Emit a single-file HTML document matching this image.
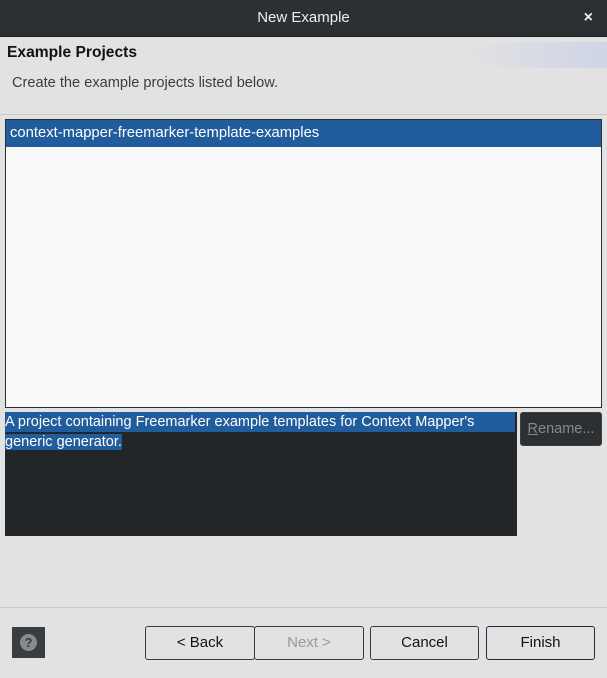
<!DOCTYPE html>
<html><head><style>
body{margin:0;width:607px;height:678px;background:#e2e2e2;font-family:"Liberation Sans",sans-serif;position:relative;overflow:hidden;font-size:14px}
.a{position:absolute;box-sizing:border-box;white-space:nowrap}
.btn{position:absolute;box-sizing:border-box;top:626px;height:34px;border:1px solid #3a3d40;border-radius:3px;background:#e2e2e2;text-align:center;line-height:32px;font-size:15px;color:#111}
</style></head><body>
<div class="a" style="left:0;top:0;width:607px;height:37px;background:#2d3033;border-bottom:1px solid #1a1c1e;color:#eee;text-align:center;line-height:36px;font-size:15px">New Example</div>
<div class="a" style="right:14px;top:9px;color:#eee;font-size:16px;font-weight:bold">×</div>
<div class="a" style="left:460px;top:42px;width:160px;height:26px;border-radius:50% 0 0 50%;background:linear-gradient(to right,rgba(226,226,226,1),rgba(205,212,230,1));"></div>
<div class="a" style="left:7px;top:44px;font-weight:bold;font-size:15.6px;color:#111">Example Projects</div>
<div class="a" style="left:12px;top:75px;color:#3a3d40;font-size:14.6px">Create the example projects listed below.</div>
<div class="a" style="left:0;top:114px;width:607px;height:1px;background:#c8c8c8"></div>
<div class="a" style="left:5px;top:119px;width:597px;height:289px;border:1px solid #2d3033;background:#f9f9f9"></div>
<div class="a" style="left:6px;top:120px;width:595px;height:27px;background:#215d9c;color:#fff;line-height:27px;padding-left:4px;font-size:14.8px">context-mapper-freemarker-template-examples</div>
<div class="a" style="left:5px;top:412px;width:512px;height:124px;background:#232629;color:#fff;font-size:14.5px;line-height:20px">
<span style="background:#215d9c;display:inline-block;width:510px">A project containing Freemarker example templates for Context Mapper's</span><br><span style="background:#215d9c">generic generator.</span></div>
<div class="a" style="left:520px;top:412px;width:82px;height:34px;background:#2d3033;border:1px solid #3a3d40;border-radius:3px;color:#888;text-align:center;line-height:32px;font-size:14.5px"><u>R</u>ename...</div>
<div class="a" style="left:0;top:607px;width:607px;height:1px;background:#c8c8c8"></div>
<div class="a" style="left:12px;top:627px;width:33px;height:31px;background:#3a3d40"><div class="a" style="left:8px;top:7px;width:17px;height:17px;border-radius:50%;background:#8a8a8a;color:#3a3d40;font-weight:bold;font-size:13px;text-align:center;line-height:17px">?</div></div>
<div class="btn" style="left:145px;width:110px">&lt; Back</div>
<div class="btn" style="left:254px;width:110px;color:#999">Next &gt;</div>
<div class="btn" style="left:370px;width:109px">Cancel</div>
<div class="btn" style="left:486px;width:109px;border-color:#1c2e44">Finish</div>
</body></html>
